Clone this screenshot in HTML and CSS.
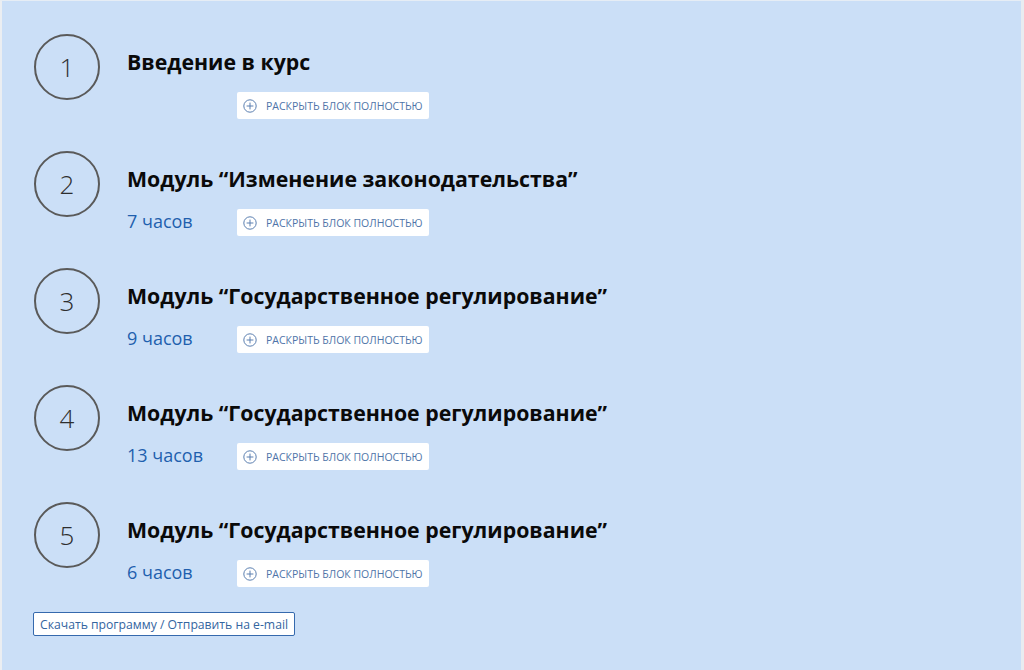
FILE: index.html
```html
<!DOCTYPE html>
<html lang="ru">
<head>
<meta charset="utf-8">
<link rel="stylesheet" href="styles.css">
</head>
<body>
<div class="frame">
  <div class="program">
    <div class="module">
      <div class="num">1</div>
      <div class="info">
        <div class="title">Введение в курс</div>
        <div class="sub">
          <span class="hours"></span>
          <button class="expand"><svg class="plus" viewBox="0 0 14 14"><circle cx="7" cy="7" r="6.2"/><path d="M7 3.6v6.8M3.6 7h6.8"/></svg>Раскрыть блок полностью</button>
        </div>
      </div>
    </div>
    <div class="module">
      <div class="num">2</div>
      <div class="info">
        <div class="title">Модуль “Изменение законодательства”</div>
        <div class="sub">
          <span class="hours">7 часов</span>
          <button class="expand"><svg class="plus" viewBox="0 0 14 14"><circle cx="7" cy="7" r="6.2"/><path d="M7 3.6v6.8M3.6 7h6.8"/></svg>Раскрыть блок полностью</button>
        </div>
      </div>
    </div>
    <div class="module">
      <div class="num">3</div>
      <div class="info">
        <div class="title">Модуль “Государственное регулирование”</div>
        <div class="sub">
          <span class="hours">9 часов</span>
          <button class="expand"><svg class="plus" viewBox="0 0 14 14"><circle cx="7" cy="7" r="6.2"/><path d="M7 3.6v6.8M3.6 7h6.8"/></svg>Раскрыть блок полностью</button>
        </div>
      </div>
    </div>
    <div class="module">
      <div class="num">4</div>
      <div class="info">
        <div class="title">Модуль “Государственное регулирование”</div>
        <div class="sub">
          <span class="hours">13 часов</span>
          <button class="expand"><svg class="plus" viewBox="0 0 14 14"><circle cx="7" cy="7" r="6.2"/><path d="M7 3.6v6.8M3.6 7h6.8"/></svg>Раскрыть блок полностью</button>
        </div>
      </div>
    </div>
    <div class="module">
      <div class="num">5</div>
      <div class="info">
        <div class="title">Модуль “Государственное регулирование”</div>
        <div class="sub">
          <span class="hours">6 часов</span>
          <button class="expand"><svg class="plus" viewBox="0 0 14 14"><circle cx="7" cy="7" r="6.2"/><path d="M7 3.6v6.8M3.6 7h6.8"/></svg>Раскрыть блок полностью</button>
        </div>
      </div>
    </div>
    <button class="download">Скачать программу / Отправить на e-mail</button>
  </div>
</div>
</body>
</html>
```
FILE: styles.css
```css
* { box-sizing: border-box; }
html, body { margin: 0; padding: 0; }
body {
  width: 1024px;
  height: 670px;
  overflow: hidden;
  font-family: "Open Sans", "Noto Sans", sans-serif;
  background: #f0f0f0;
}
.frame {
  height: 670px;
  background: #cbdff7;
  border-top: 1px solid #e6edf5;
  border-left: 2px solid #ebeef2;
  border-right: 3px solid #e9ecf0;
}
.program {
  padding: 33px 0 0 32px;
  display: flex;
  flex-direction: column;
  align-items: flex-start;
}
.module {
  display: flex;
  gap: 27px;
  margin-bottom: 32px;
}
.num {
  width: 66px;
  height: 66px;
  border: 2px solid #5a5a5a;
  border-radius: 50%;
  display: flex;
  align-items: center;
  justify-content: center;
  font-size: 26px;
  font-weight: 300;
  color: #2e2e2e;
  flex: none;
}
.info {
  padding-top: 14px;
  display: flex;
  flex-direction: column;
  gap: 16px;
}
.title {
  font-size: 21.3px;
  line-height: 28px;
  font-weight: 700;
  color: #0a0a0a;
}
.sub {
  display: flex;
  align-items: center;
  height: 27px;
}
.hours {
  width: 110px;
  padding-bottom: 4px;
  font-size: 18px;
  line-height: 24px;
  color: #1f5fae;
  flex: none;
}
.expand {
  display: flex;
  align-items: center;
  gap: 9px;
  height: 27px;
  width: 192px;
  padding: 0 6px;
  background: #fff;
  border: none;
  border-radius: 2px;
  font-family: inherit;
  font-size: 10.5px;
  text-transform: uppercase;
  color: #4e74a8;
  white-space: nowrap;
}
.plus {
  width: 14px;
  height: 14px;
  fill: none;
  stroke: #5b7fb0;
  stroke-width: 1;
  flex: none;
}
.download {
  margin-top: -7px;
  margin-left: -1px;
  height: 24px;
  padding: 0 6px;
  background: #fff;
  border: 1px solid #3569ad;
  border-radius: 2px;
  font-family: inherit;
  font-size: 12.2px;
  color: #34659f;
}
```
